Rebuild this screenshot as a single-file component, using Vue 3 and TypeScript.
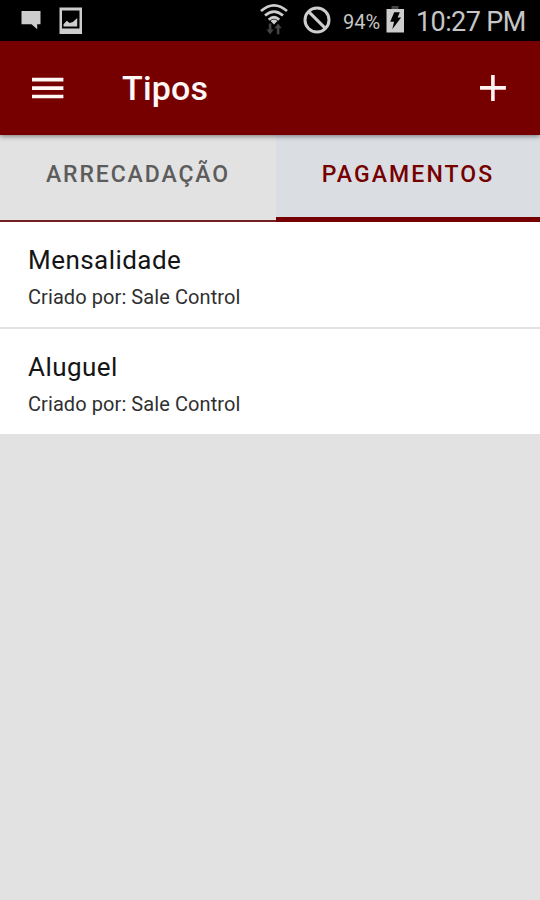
<script setup lang="ts">
import { ref } from 'vue'

interface Tab {
  id: string
  label: string
}

interface Item {
  name: string
  author: string
}

const tabs: Tab[] = [
  { id: 'income', label: 'ARRECADAÇÃO' },
  { id: 'payments', label: 'PAGAMENTOS' },
]
const active = ref('payments')

const items: Item[] = [
  { name: 'Mensalidade', author: 'Sale Control' },
  { name: 'Aluguel', author: 'Sale Control' },
]
</script>

<template>
  <div class="screen">
    <div class="status">
      <svg class="chat" viewBox="0 0 20 20" width="20" height="20">
        <path d="M0.5 1h19v13.2h-3.3v5L10.5 14.2h-10z" fill="#cdcdcd" />
      </svg>
      <svg class="photo" viewBox="0 0 24 28" width="24" height="28">
        <path fill-rule="evenodd" d="M.5 .5h22.5v26.5H.5zM3 3.5v18h17.5v-18z" fill="#cdcdcd" />
        <path d="M4.5 19.5v-2.2l3.4-3.6 2.6 2.4 3.4-1.2 4.3-4v8.6z" fill="#cdcdcd" />
      </svg>
      <span class="grow"></span>
      <svg class="wifi" viewBox="0 0 28 32" width="28" height="32">
        <g fill="none" stroke="#cdcdcd" stroke-width="2.7">
          <path d="M1 8Q14-3.4 27 8" />
          <path d="M5 12.6Q14 4.6 23 12.6" />
          <path d="M8.8 16.8Q14 11.6 19.2 16.8" />
        </g>
        <path d="M10.6 18Q14 15.2 17.4 18L14 21.4z" fill="#cdcdcd" />
        <path d="M8.8 20.5h2.6v6h2.4l-3.7 4.8-3.7-4.8h2.4zM16.8 31.3h2.6v-6h2.4l-3.7-4.8-3.7 4.8h2.4z" fill="#444" />
      </svg>
      <svg class="blocked" viewBox="0 0 28 28" width="28" height="28">
        <g fill="none" stroke="#cdcdcd" stroke-width="3">
          <circle cx="14" cy="14" r="12" />
          <path d="M5.6 5.6l16.8 16.8" />
        </g>
      </svg>
      <span class="percent">94%</span>
      <svg class="battery" viewBox="0 0 18 27" width="18" height="27">
        <path d="M5.5 0h7v3h-7z" fill="#444" />
        <path d="M.5 3H18v23.5H.5z" fill="#cdcdcd" />
        <path d="M8.2 6.2h5.6l-2.2 5.3h3.5L6.3 23.2l1.8-7.4H4.2z" fill="#000" />
      </svg>
      <span class="clock">10:27 PM</span>
    </div>

    <header class="bar">
      <button class="icon-btn" aria-label="Menu">
        <svg viewBox="0 0 32 22" width="32" height="22">
          <path d="M0 .8h31.4v3.6H0zM0 9.3h31.4v3.6H0zM0 17.7h31.4v3.6H0z" fill="#fff6f6" />
        </svg>
      </button>
      <h1>Tipos</h1>
      <button class="icon-btn" aria-label="Adicionar">
        <svg viewBox="0 0 26 26" width="26" height="26">
          <path d="M11.1 0h3.6v11.1h11.2v3.6H14.7v11.2h-3.6V14.7H0v-3.6h11.1z" fill="#fff2f2" />
        </svg>
      </button>
    </header>

    <nav class="tabs">
      <button
        v-for="tab in tabs"
        :key="tab.id"
        :class="['tab', tab.id, { active: tab.id === active }]"
        @click="active = tab.id"
      >
        <span>{{ tab.label }}</span>
      </button>
    </nav>

    <ul class="list">
      <li v-for="item in items" :key="item.name">
        <div class="name"><span>{{ item.name }}</span></div>
        <div class="author"><span>Criado por: {{ item.author }}</span></div>
      </li>
    </ul>
  </div>
</template>

<style>
body {
  margin: 0;
  background: #e2e2e2;
}
</style>

<style scoped>
.screen {
  width: 540px;
  height: 900px;
  overflow: hidden;
  background: #e2e2e2;
  font-family: Roboto, sans-serif;
}
.status {
  display: flex;
  align-items: flex-start;
  box-sizing: border-box;
  height: 41px;
  padding: 0 15px 0 21px;
  background: #000;
  color: #c6c6c6;
}
.status svg {
  flex: none;
}
.grow {
  flex: 1;
}
.chat {
  margin: 10px 18px 0 0;
}
.photo {
  margin-top: 7px;
}
.wifi {
  margin: 3px 15px 0 0;
}
.blocked {
  margin: 6px 12px 0 0;
}
.percent {
  width: 38px;
  margin-right: 5px;
  font-size: 20px;
  line-height: 24px;
  margin-top: 10px;
  letter-spacing: 0;
  white-space: nowrap;
}
.battery {
  margin: 6px 12px 0 0;
}
.clock {
  width: 109px;
  margin-top: 5px;
  font-size: 27px;
  line-height: 34px;
  letter-spacing: -0.6px;
  white-space: nowrap;
}
button {
  margin: 0;
  padding: 0;
  border: 0;
  background: none;
  font: inherit;
}
.bar {
  position: relative;
  z-index: 1;
  display: flex;
  align-items: center;
  box-sizing: border-box;
  height: 94px;
  padding: 0 34px 0 32px;
  background: #760000;
  box-shadow: 0 1px 5px rgba(0, 0, 0, 0.5);
}
.icon-btn {
  display: flex;
}
h1 {
  flex: 1;
  margin: 0 0 0 58px;
  color: #fff6f6;
  font-size: 34px;
  line-height: 40px;
  font-weight: 500;
  letter-spacing: 0.2px;
}
.tabs {
  display: flex;
  align-items: stretch;
  height: 87px;
}
.tab {
  display: flex;
  align-items: flex-start;
  justify-content: center;
  box-sizing: border-box;
  width: 276px;
  padding-top: 26px;
  border-bottom: 2px solid #742020;
  color: #5c5c5c;
  font-size: 23px;
  line-height: 28px;
  font-weight: 500;
  letter-spacing: 1.9px;
  white-space: nowrap;
}
.tab.payments {
  width: 264px;
}
.tab.active {
  border-bottom: 5px solid #760000;
  background: #dadee3;
  color: #760000;
  letter-spacing: 2.1px;
}
.list {
  margin: 0;
  padding: 0;
  list-style: none;
}
.list li {
  box-sizing: border-box;
  height: 107px;
  padding: 22px 28px 0;
  border-bottom: 2px solid #e2e2e2;
  background: #fff;
}
.name {
  color: #151515;
  font-size: 26px;
  line-height: 32px;
  letter-spacing: 0.45px;
}
.author {
  margin-top: 9px;
  color: #303030;
  font-size: 20px;
  line-height: 24px;
  letter-spacing: 0.08px;
}
</style>
